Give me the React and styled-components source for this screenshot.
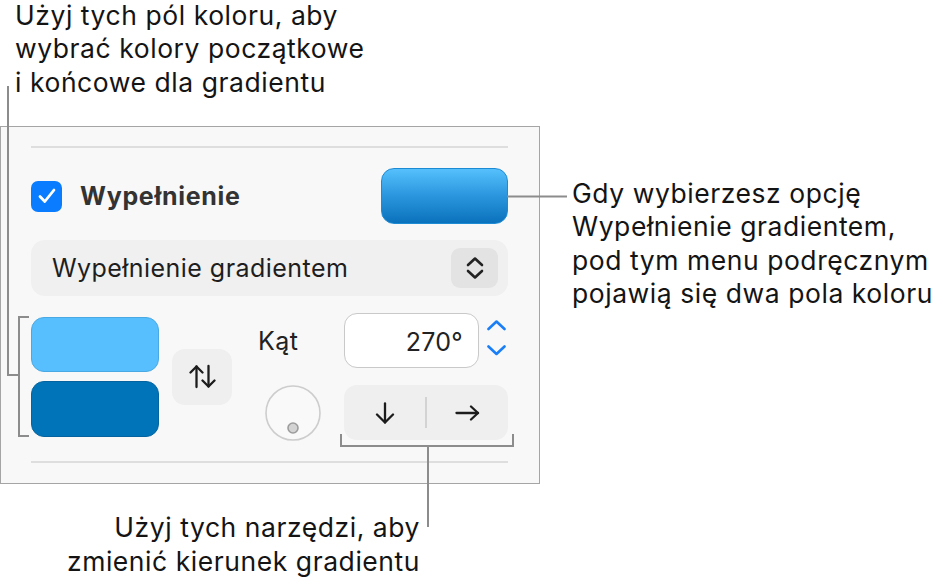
import React from "react";
import styled, { createGlobalStyle } from "styled-components";

const Global = createGlobalStyle`
  html, body { margin: 0; padding: 0; background: #ffffff; }
  body { font-family: Inter, "Noto Sans", "Liberation Sans", sans-serif; color: #111; }
  * { box-sizing: border-box; }
`;

const Page = styled.div`
  position: relative;
  width: 943px;
  height: 587px;
  display: grid;
  grid-template-columns: 540px 1fr;
  grid-template-rows: 126px 358px 1fr;
  background: #fff;
`;

const Note = styled.div`
  font-size: 26.5px;
  letter-spacing: 0.55px;
  line-height: 33.3px;
  color: #141414;
  white-space: nowrap;
`;

const TopNote = styled(Note)`
  grid-column: 1 / -1;
  padding-left: 15px;
  margin-top: -1px;
`;

const RightNote = styled(Note)`
  padding-left: 32px;
  padding-top: 51px;
`;

const BottomNote = styled(Note)`
  text-align: right;
  padding-right: 120px;
  padding-top: 26px;
  line-height: 34px;
`;

const Panel = styled.section`
  height: 358px;
  border: 1px solid #a5a5a5;
  background: #f8f8f8;
  padding: 19px 31px 0 30px;
  display: flex;
  flex-direction: column;
`;

const Separator = styled.div`
  height: 2px;
  background: #dedede;
  margin-top: ${(p) => p.$mt || 0}px;
`;

const HeaderRow = styled.div`
  margin-top: 20px;
  height: 56px;
  display: flex;
  align-items: center;
`;

const Checkbox = styled.div`
  width: 31px;
  height: 31px;
  border-radius: 7px;
  background: #0a7cff;
  display: flex;
  align-items: center;
  justify-content: center;
`;

const FillLabel = styled.span`
  margin-left: 18px;
  font-size: 25px;
  letter-spacing: 0.7px;
  font-weight: 700;
  color: #333;
`;

const Well = styled.div`
  width: ${(p) => p.$w || 128}px;
  height: ${(p) => p.$h || 55}px;
  border-radius: 13px;
  background: ${(p) => p.$bg};
  border: 1px solid ${(p) => p.$border};
  margin-left: ${(p) => (p.$right ? "auto" : "0")};
`;

const Popup = styled.div`
  margin-top: 16px;
  height: 56px;
  border-radius: 14px;
  background: #f0f0f0;
  display: flex;
  align-items: center;
  padding: 0 10px 0 21px;
  font-size: 25px;
  letter-spacing: 0.45px;
  color: #1e1e1e;
`;

const PopupText = styled.span`
  flex: 1;
`;

const Stepper = styled.div`
  width: 47px;
  height: 40px;
  border-radius: 9px;
  background: #e3e3e3;
  display: flex;
  align-items: center;
  justify-content: center;
`;

const Controls = styled.div`
  margin-top: 17px;
  height: 127px;
  display: flex;
`;

const WellStack = styled.div`
  margin-top: 4px;
  display: flex;
  flex-direction: column;
  gap: 9px;
`;

const SquareButton = styled.div`
  align-self: center;
  margin-left: 13px;
  width: 60px;
  height: 56px;
  border-radius: 13px;
  background: #efefef;
  display: flex;
  align-items: center;
  justify-content: center;
`;

const AngleGrid = styled.div`
  margin-left: 26px;
  display: grid;
  grid-template-columns: 86px 164px;
  grid-template-rows: 55px 55px;
  row-gap: 17px;
`;

const AngleLabel = styled.span`
  font-size: 25px;
  letter-spacing: 0.4px;
  color: #222;
  align-self: center;
`;

const FieldRow = styled.div`
  display: flex;
  align-items: center;
`;

const Field = styled.div`
  width: 135px;
  height: 55px;
  border-radius: 13px;
  border: 1.5px solid #c9c9c9;
  background: #fff;
  display: flex;
  align-items: center;
  justify-content: flex-end;
  padding: 3px 15px 0 0;
  font-size: 25px;
  letter-spacing: 0.3px;
  color: #222;
`;

const BlueStepper = styled.div`
  margin-left: 8px;
  display: flex;
  flex-direction: column;
  gap: 14px;
  margin-top: -6px;
`;

const Dial = styled.div`
  margin-left: 7px;
  width: 56px;
  height: 56px;
`;

const Segmented = styled.div`
  border-radius: 13px;
  background: #efefef;
  display: flex;
  align-items: center;
`;

const Segment = styled.div`
  flex: 1;
  height: 100%;
  display: flex;
  align-items: center;
  justify-content: center;
`;

const SegDivider = styled.div`
  width: 2px;
  height: 31px;
  background: #d3d3d3;
`;

const Leaders = styled.svg`
  position: absolute;
  left: 0;
  top: 0;
  pointer-events: none;
`;

const Chevron = ({ up, color = "#1f1f1f", w = 16, h = 8, sw = 2.6 }) => (
  <svg width={w} height={h + 2} viewBox={`0 0 ${w} ${h + 2}`} fill="none">
    <polyline
      points={up ? `1.5,${h} ${w / 2},1.5 ${w - 1.5},${h}` : `1.5,1.5 ${w / 2},${h} ${w - 1.5},1.5`}
      stroke={color}
      strokeWidth={sw}
      strokeLinecap="round"
      strokeLinejoin="round"
    />
  </svg>
);

export default function App() {
  const line = { stroke: "#8c8c8c", strokeWidth: 2, fill: "none" };
  return (
    <>
      <Global />
      <Page>
        <TopNote>
          Użyj tych pól koloru, aby
          <br />
          wybrać kolory początkowe
          <br />i końcowe dla gradientu
        </TopNote>

        <Panel>
          <Separator />
          <HeaderRow>
            <Checkbox>
              <svg width="18" height="16" viewBox="0 0 18 16" fill="none">
                <polyline points="2,8.5 6.8,13.5 16,2" stroke="#fff" strokeWidth="2.8" strokeLinecap="round" strokeLinejoin="round" />
              </svg>
            </Checkbox>
            <FillLabel>Wypełnienie</FillLabel>
            <Well $right $w={127} $h={56} $bg="linear-gradient(180deg, #55c0fc 0%, #2a95dd 50%, #0a72bc 100%)" $border="#1d8bd4" />
          </HeaderRow>

          <Popup>
            <PopupText>Wypełnienie gradientem</PopupText>
            <Stepper>
              <svg width="18" height="24" viewBox="0 0 18 24" fill="none">
                <polyline points="2,9 9,2.5 16,9" stroke="#222" strokeWidth="2.6" strokeLinecap="round" strokeLinejoin="round" />
                <polyline points="2,15 9,21.5 16,15" stroke="#222" strokeWidth="2.6" strokeLinecap="round" strokeLinejoin="round" />
              </svg>
            </Stepper>
          </Popup>

          <Controls>
            <WellStack>
              <Well $bg="#57bffd" $border="#4aa9e3" />
              <Well $h={56} $bg="#0074b8" $border="#0564a0" />
            </WellStack>
            <SquareButton>
              <svg width="27" height="25" viewBox="0 0 27 25" fill="none" stroke="#1c1c1c" strokeWidth="2.3" strokeLinecap="round" strokeLinejoin="round">
                <line x1="7.5" y1="2.5" x2="7.5" y2="23" />
                <polyline points="1.5,8.5 7.5,2.5 13.5,8.5" />
                <line x1="19.5" y1="2" x2="19.5" y2="22.5" />
                <polyline points="13.5,16.5 19.5,22.5 25.5,16.5" />
              </svg>
            </SquareButton>
            <AngleGrid>
              <AngleLabel>Kąt</AngleLabel>
              <FieldRow>
                <Field>270°</Field>
                <BlueStepper>
                  <Chevron up color="#1a7ff6" w={19} h={9} sw={2.6} />
                  <Chevron color="#1a7ff6" w={19} h={9} sw={2.6} />
                </BlueStepper>
              </FieldRow>
              <Dial>
                <svg width="56" height="56" viewBox="0 0 56 56">
                  <circle cx="28" cy="28" r="27" fill="#f9f9f9" stroke="#cdcdcd" strokeWidth="1.6" />
                  <circle cx="28" cy="43" r="5" fill="#d3d3d3" stroke="#9c9c9c" strokeWidth="1.6" />
                </svg>
              </Dial>
              <Segmented>
                <Segment>
                  <svg width="22" height="22" viewBox="0 0 22 22" fill="none" stroke="#1c1c1c" strokeWidth="2.3" strokeLinecap="round" strokeLinejoin="round">
                    <line x1="11" y1="1.5" x2="11" y2="20.5" />
                    <polyline points="3,12.5 11,20.5 19,12.5" />
                  </svg>
                </Segment>
                <SegDivider />
                <Segment>
                  <svg width="25" height="16" viewBox="0 0 25 16" fill="none" stroke="#1c1c1c" strokeWidth="2.3" strokeLinecap="round" strokeLinejoin="round">
                    <line x1="1.5" y1="8" x2="23" y2="8" />
                    <polyline points="16,1.5 23,8 16,14.5" />
                  </svg>
                </Segment>
              </Segmented>
            </AngleGrid>
          </Controls>
          <Separator $mt={21} />
        </Panel>

        <RightNote>
          Gdy wybierzesz opcję
          <br />
          Wypełnienie gradientem,
          <br />
          pod tym menu podręcznym
          <br />
          pojawią się dwa pola koloru
        </RightNote>

        <BottomNote>
          Użyj tych narzędzi, aby
          <br />
          zmienić kierunek gradientu
        </BottomNote>

        <Leaders width="943" height="587" viewBox="0 0 943 587">
          <polyline points="8,86 8,375 19,375" {...line} />
          <polyline points="29,317 19,317 19,436 29,436" {...line} />
          <line x1="507" y1="196.5" x2="567" y2="196.5" {...line} />
          <polyline points="341,434 341,446 513,446 513,434" {...line} />
          <line x1="428" y1="446" x2="428" y2="527" {...line} />
        </Leaders>
      </Page>
    </>
  );
}
